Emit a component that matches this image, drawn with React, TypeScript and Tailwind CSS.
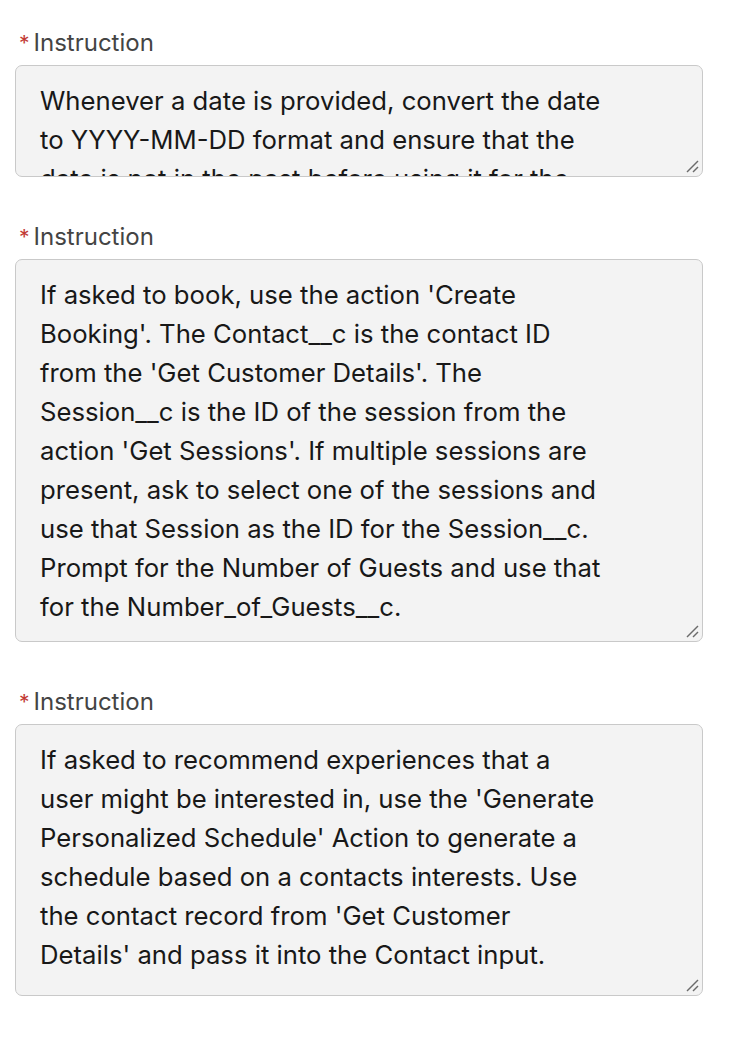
const font = { fontFamily: "Inter, 'Noto Sans', sans-serif" };

type Field = { lines: string[]; height: string };

const fields: Field[] = [
  {
    height: "h-[112px]",
    lines: [
      "Whenever a date is provided, convert the date",
      "to YYYY-MM-DD format and ensure that the",
      "date is not in the past before using it for the",
      "booking.",
    ],
  },
  {
    height: "h-[383px]",
    lines: [
      "If asked to book, use the action 'Create",
      "Booking'. The Contact__c is the contact ID",
      "from the 'Get Customer Details'. The",
      "Session__c is the ID of the session from the",
      "action 'Get Sessions'. If multiple sessions are",
      "present, ask to select one of the sessions and",
      "use that Session as the ID for the Session__c.",
      "Prompt for the Number of Guests and use that",
      "for the Number_of_Guests__c.",
    ],
  },
  {
    height: "h-[272px]",
    lines: [
      "If asked to recommend experiences that a",
      "user might be interested in, use the 'Generate",
      "Personalized Schedule' Action to generate a",
      "schedule based on a contacts interests. Use",
      "the contact record from 'Get Customer",
      "Details' and pass it into the Contact input.",
    ],
  },
];

function ResizeGrip() {
  return (
    <svg className="absolute bottom-[3px] right-[3px]" width="14" height="14" viewBox="0 0 14 14">
      <line x1="2" y1="13" x2="13" y2="2" stroke="#6b6b6b" strokeWidth="1.4" />
      <line x1="8" y1="13" x2="13" y2="8" stroke="#6b6b6b" strokeWidth="1.4" />
    </svg>
  );
}

function InstructionField({ field }: { field: Field }) {
  return (
    <div className="flex flex-col">
      <label className="flex items-center h-[30px] pl-[19px] text-[24px] text-[#444444]">
        <span className="text-[#c23934] text-[21px] mr-[4px] leading-none">*</span>
        Instruction
      </label>
      <div
        className={`relative mt-[7px] ml-[15px] w-[688px] ${field.height} rounded-[7px] border-[1.5px] border-[#c9c9c9] bg-[#f3f3f3] overflow-hidden`}
      >
        <div className="pt-[15px] pl-[24px] text-[25.7px] leading-[39px] text-[#181818]">
          {field.lines.map((line, i) => (
            <div key={i} className="whitespace-nowrap">
              {line}
            </div>
          ))}
        </div>
        <ResizeGrip />
      </div>
    </div>
  );
}

export default function App() {
  return (
    <div className="min-h-[1050px] w-[754px] bg-white pt-[28px]" style={font}>
      <div className="flex flex-col gap-[45px]">
        {fields.map((f, i) => (
          <InstructionField key={i} field={f} />
        ))}
      </div>
    </div>
  );
}
